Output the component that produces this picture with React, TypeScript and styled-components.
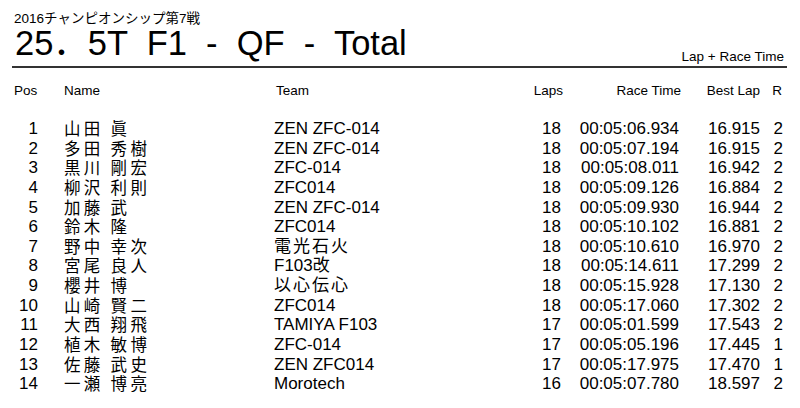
import React from 'react';
import styled, { createGlobalStyle } from 'styled-components';

const GlobalStyle = createGlobalStyle`
  html, body {
    margin: 0;
    padding: 0;
    background: #fff;
  }
  body {
    font-family: "Liberation Sans", "Noto Sans CJK JP", sans-serif;
    color: #000;
  }
`;

type Result = {
  pos: number;
  name: string;
  team: string;
  laps: number;
  raceTime: string;
  bestLap: string;
  r: number;
};

const results: Result[] = [
  { pos: 1, name: '山田 眞', team: 'ZEN ZFC-014', laps: 18, raceTime: '00:05:06.934', bestLap: '16.915', r: 2 },
  { pos: 2, name: '多田 秀樹', team: 'ZEN ZFC-014', laps: 18, raceTime: '00:05:07.194', bestLap: '16.915', r: 2 },
  { pos: 3, name: '黒川 剛宏', team: 'ZFC-014', laps: 18, raceTime: '00:05:08.011', bestLap: '16.942', r: 2 },
  { pos: 4, name: '柳沢 利則', team: 'ZFC014', laps: 18, raceTime: '00:05:09.126', bestLap: '16.884', r: 2 },
  { pos: 5, name: '加藤 武', team: 'ZEN ZFC-014', laps: 18, raceTime: '00:05:09.930', bestLap: '16.944', r: 2 },
  { pos: 6, name: '鈴木 隆', team: 'ZFC014', laps: 18, raceTime: '00:05:10.102', bestLap: '16.881', r: 2 },
  { pos: 7, name: '野中 幸次', team: '電光石火', laps: 18, raceTime: '00:05:10.610', bestLap: '16.970', r: 2 },
  { pos: 8, name: '宮尾 良人', team: 'F103改', laps: 18, raceTime: '00:05:14.611', bestLap: '17.299', r: 2 },
  { pos: 9, name: '櫻井 博', team: '以心伝心', laps: 18, raceTime: '00:05:15.928', bestLap: '17.130', r: 2 },
  { pos: 10, name: '山崎 賢二', team: 'ZFC014', laps: 18, raceTime: '00:05:17.060', bestLap: '17.302', r: 2 },
  { pos: 11, name: '大西 翔飛', team: 'TAMIYA F103', laps: 17, raceTime: '00:05:01.599', bestLap: '17.543', r: 2 },
  { pos: 12, name: '植木 敏博', team: 'ZFC-014', laps: 17, raceTime: '00:05:05.196', bestLap: '17.445', r: 1 },
  { pos: 13, name: '佐藤 武史', team: 'ZEN ZFC014', laps: 17, raceTime: '00:05:17.975', bestLap: '17.470', r: 1 },
  { pos: 14, name: '一瀬 博亮', team: 'Morotech', laps: 16, raceTime: '00:05:07.780', bestLap: '18.597', r: 2 },
];

const isKanji = (s: string) => /^[\u3000-\u9fff]+$/.test(s);

const App = () => {
  return (
    <Page>
      <GlobalStyle />
      <Subtitle>2016チャンピオンシップ第7戦</Subtitle>
      <TitleBar>
        <Title>25．5T  F1  -  QF  -  Total</Title>
        <ModeLabel>Lap + Race Time</ModeLabel>
      </TitleBar>

      <HeaderRow>
        <Cell>Pos</Cell>
        <Cell $indent={24}>Name</Cell>
        <Cell>Team</Cell>
        <Cell $align='right'>Laps</Cell>
        <Cell $align='right'>Race Time</Cell>
        <Cell $align='right' $shift={2}>Best Lap</Cell>
        <Cell $align='right' $shift={3}>R</Cell>
      </HeaderRow>

      <Rows>
        {results.map(r => (
          <Row key={r.pos}>
            <Cell $align='right'>{r.pos}</Cell>
            <NameCell>{r.name}</NameCell>
            <TeamCell $spaced={isKanji(r.team)}>{r.team}</TeamCell>
            <Cell $align='right'>{r.laps}</Cell>
            <Cell $align='right'>{r.raceTime}</Cell>
            <Cell $align='right'>{r.bestLap}</Cell>
            <Cell $align='right'>{r.r}</Cell>
          </Row>
        ))}
      </Rows>
    </Page>
  );
};

const columns = '26px 236px 246px 41px 118px 81px 23px';

const Page = styled.div`
  width: 800px;
  height: 408px;
  box-sizing: border-box;
  padding: 11px 13px 0 12px;
  overflow: hidden;
`;

const Subtitle = styled.div`
  font-size: 13.5px;
  line-height: 15px;
  padding-left: 2px;
`;

const TitleBar = styled.div`
  display: flex;
  justify-content: space-between;
  align-items: flex-end;
  border-bottom: 2px solid #333;
  padding-bottom: 2px;
`;

const Title = styled.h1`
  margin: 0 0 3px;
  padding-left: 3px;
  font-weight: normal;
  font-size: 34.5px;
  line-height: 35px;
  white-space: pre;
`;

const ModeLabel = styled.div`
  font-size: 13.5px;
  line-height: 15px;
  padding-right: 3px;
`;

const HeaderRow = styled.div`
  display: grid;
  grid-template-columns: ${columns};
  margin-top: 15px;
  font-size: 13.5px;
  line-height: 16px;
  padding-left: 2px;
`;

const Rows = styled.div`
  margin-top: 20px;
  display: flex;
  flex-direction: column;
`;

const Row = styled.div`
  display: grid;
  grid-template-columns: ${columns};
  height: 19.65px;
  font-size: 17px;
  line-height: 19.65px;
`;

const Cell = styled.div<{ $align?: 'left' | 'right'; $indent?: number; $shift?: number }>`
  text-align: ${p => p.$align ?? 'left'};
  padding-left: ${p => p.$indent ?? 0}px;
  padding-right: ${p => p.$shift ?? 0}px;
  white-space: nowrap;
`;

const NameCell = styled.div`
  padding-left: 26px;
  font-family: "Noto Sans CJK JP", sans-serif;
  font-size: 16.5px;
  letter-spacing: 3.3px;
  white-space: nowrap;
`;

const TeamCell = styled.div<{ $spaced: boolean }>`
  letter-spacing: ${p => (p.$spaced ? '2px' : '0')};
  white-space: nowrap;
`;

export default App;
